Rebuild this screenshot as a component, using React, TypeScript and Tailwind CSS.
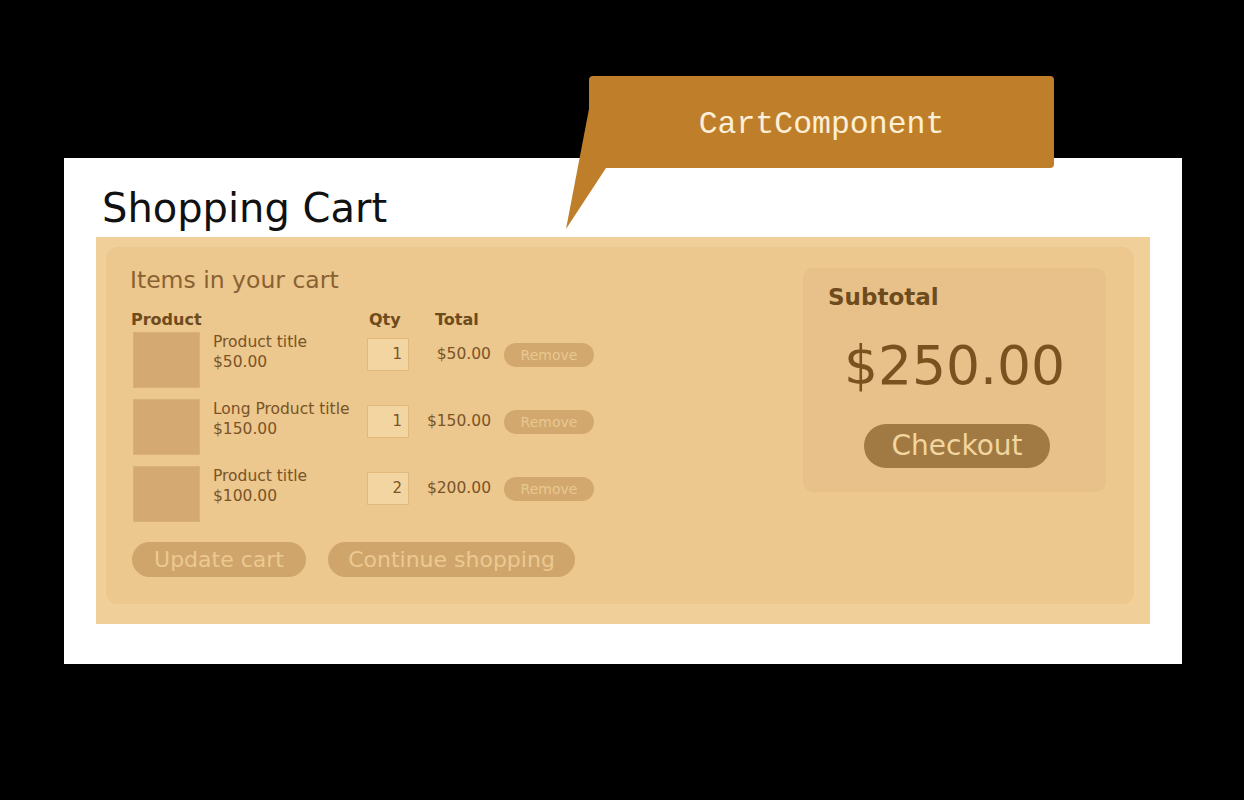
const items = [
  { title: "Product title", price: "$50.00", qty: 1, total: "$50.00" },
  { title: "Long Product title", price: "$150.00", qty: 1, total: "$150.00" },
  { title: "Product title", price: "$100.00", qty: 2, total: "$200.00" },
];

function CartRow({ item }: { item: (typeof items)[number] }) {
  return (
    <div className="flex items-start">
      <div className="w-[80px] shrink-0">
        <div className="w-[67px] h-[56px] bg-[#d4aa72] border border-[#d9b07a]" />
      </div>
      <div className="w-[154px] shrink-0 text-[15.5px] leading-[20px] text-[#7a5426]">
        <div>{item.title}</div>
        <div>{item.price}</div>
      </div>
      <div className="flex items-center h-[33px] mt-[6px]">
        <div className="w-[42px] h-[33px] border border-[#e0b97f] bg-[#f3d5a2] flex items-center justify-end pr-[6px] text-[15px] text-[#7a5426]">
          {item.qty}
        </div>
        <div className="w-[82px] text-right text-[15.5px] text-[#7a5426]">{item.total}</div>
        <button className="ml-[13px] w-[90px] h-[24px] rounded-full bg-[#d2a86e] text-[14px] text-[#e9c790] leading-none">
          Remove
        </button>
      </div>
    </div>
  );
}

export default function App() {
  return (
    <div
      className="relative w-[1244px] h-[800px] bg-black pt-[158px] pl-[64px]"
      style={{ fontFamily: '"DejaVu Sans", "Noto Sans", sans-serif' }}
    >
      <div className="w-[1118px] h-[506px] bg-white pt-[26px]">
        <h1 className="ml-[38px] text-[40px] leading-[48px] text-[#111]">Shopping Cart</h1>

        <div className="mt-[5px] mx-[32px] h-[387px] bg-[#f1cf98] pt-[10px] pl-[10px] pr-[16px] pb-[20px]">
          <div className="h-full rounded-xl bg-[#ecc78e] flex">
            {/* items column */}
            <div className="flex-1 pt-[19px] pl-[24px]">
              <h2 className="text-[23.5px] leading-[28px] text-[#8a6232]">Items in your cart</h2>

              <div className="mt-[17px] ml-[1px] flex text-[16px] leading-[18px] font-bold text-[#6e4b1d]">
                <div className="w-[238px]">Product</div>
                <div className="w-[66px]">Qty</div>
                <div>Total</div>
              </div>

              <div className="mt-[3px] ml-[3px] flex flex-col gap-[11px]">
                {items.map((item, i) => (
                  <CartRow key={i} item={item} />
                ))}
              </div>

              <div className="mt-[20px] ml-[2px] flex gap-[22px]">
                <button className="w-[174px] h-[35px] rounded-full bg-[#cfa56c] text-[22px] leading-none text-[#ebc991]">
                  Update cart
                </button>
                <button className="w-[247px] h-[35px] rounded-full bg-[#cfa56c] text-[22px] leading-none text-[#ebc991]">
                  Continue shopping
                </button>
              </div>
            </div>

            {/* summary */}
            <div className="mt-[21px] mr-[28px] w-[303px] h-[224px] rounded-[10px] bg-[#e8c18a] pt-[15px] flex flex-col">
              <div className="pl-[25px] text-[23px] leading-[28px] font-bold text-[#6e4b1d]">Subtotal</div>
              <div className="mt-[25px] text-center text-[53.5px] leading-[60px] text-[#7a5220]">$250.00</div>
              <div className="mt-[28px] flex justify-center">
                <button className="ml-[5px] w-[186px] h-[44px] rounded-full bg-[#a07a42] text-[28px] leading-none text-[#f3d59f]">
                  Checkout
                </button>
              </div>
            </div>
          </div>
        </div>
      </div>

      {/* callout */}
      <svg className="absolute left-[560px] top-[100px]" width="50" height="135" viewBox="0 0 50 135">
        <polygon points="29,9 46,68 6,129" fill="#bf7f2a" />
      </svg>
      <div className="absolute left-[589px] top-[76px] w-[465px] h-[92px] rounded-[4px] bg-[#bf7f2a] flex items-center justify-center pt-[6px]">
        <span
          className="text-[31.5px] text-[#fcefd8]"
          style={{ fontFamily: '"Liberation Mono", "Courier New", monospace' }}
        >
          CartComponent
        </span>
      </div>
    </div>
  );
}
